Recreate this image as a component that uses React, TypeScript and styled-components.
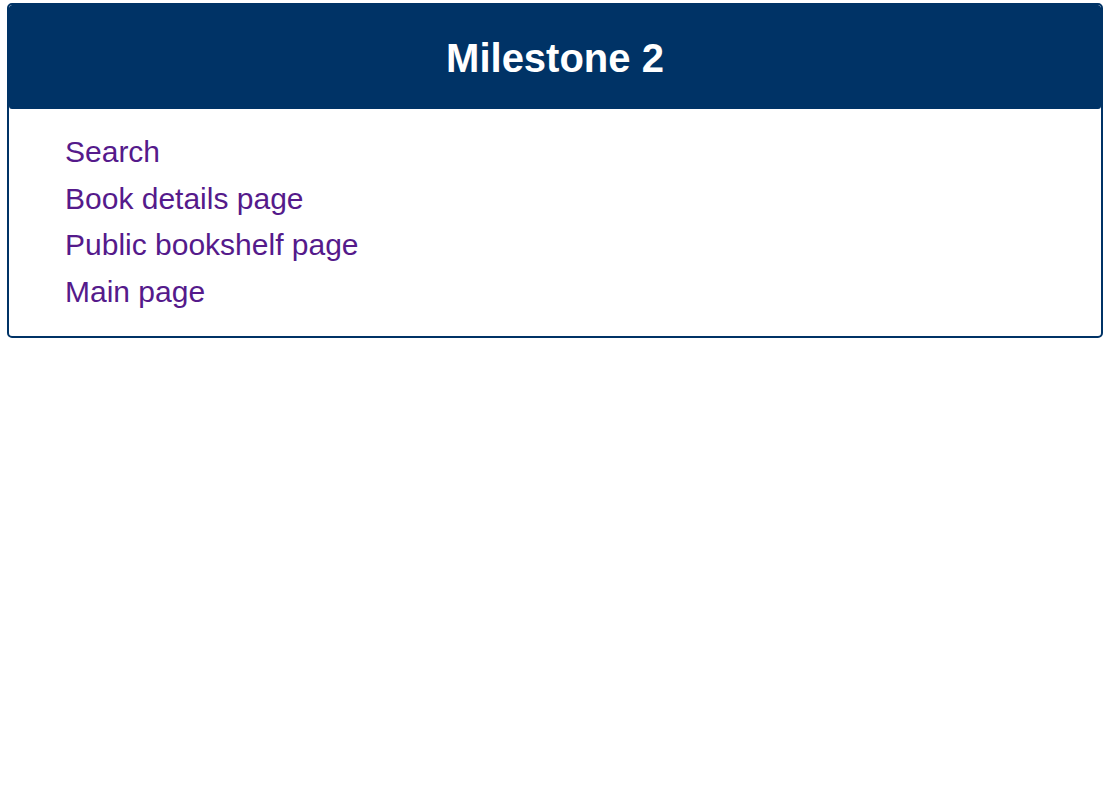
import React from "react";
import styled, { createGlobalStyle } from "styled-components";

const GlobalStyle = createGlobalStyle`
  html, body {
    margin: 0;
    padding: 0;
    background: #ffffff;
    font-family: "Liberation Sans", Arial, sans-serif;
  }
`;

const Page = styled.div`
  padding: 3px 1px 0 7px;
`;

const Card = styled.section`
  border: 2px solid #003366;
  border-radius: 5px;
  overflow: hidden;
`;

const Header = styled.header`
  background: #003366;
  height: 104px;
  display: flex;
  align-items: center;
  justify-content: center;
  border-radius: 3px;
`;

const Title = styled.h1`
  margin: 2px 0 0;
  color: #ffffff;
  font-size: 40px;
  font-weight: 700;
`;

const LinkList = styled.ul`
  list-style: none;
  margin: 0;
  padding: 20px 0 21px 56px;
`;

const Item = styled.li`
  font-size: 30px;
  line-height: 46.5px;
`;

const Link = styled.a`
  color: #551a8b;
  text-decoration: none;
`;

const links = ["Search", "Book details page", "Public bookshelf page", "Main page"];

export default function App() {
  return (
    <>
      <GlobalStyle />
      <Page>
        <Card>
          <Header>
            <Title>Milestone 2</Title>
          </Header>
          <LinkList>
            {links.map((l) => (
              <Item key={l}>
                <Link href="#">{l}</Link>
              </Item>
            ))}
          </LinkList>
        </Card>
      </Page>
    </>
  );
}
